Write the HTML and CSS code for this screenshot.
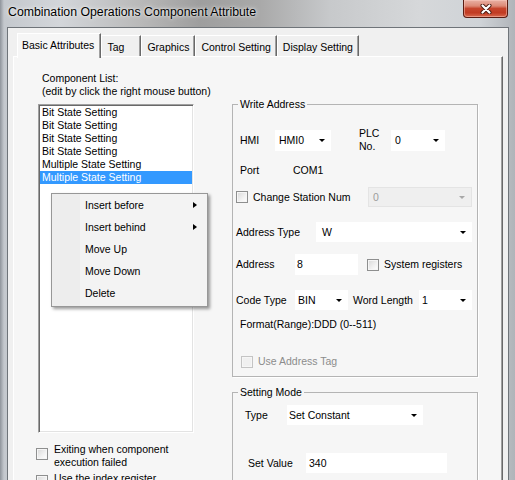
FILE: index.html
```html
<!DOCTYPE html>
<html>
<head>
<meta charset="utf-8">
<link rel="stylesheet" href="styles.css">
</head>
<body>
<div class="window">
  <div class="titlebar">
    <span class="title">Combination Operations Component Attribute</span>
    <div class="close">
      <svg width="12" height="10" viewBox="0 0 12 10">
        <path d="M2.5 1.5 L9.5 8.5 M9.5 1.5 L2.5 8.5" stroke="#4a1a10" stroke-width="4" stroke-linecap="round" fill="none"/>
        <path d="M2.5 1.5 L9.5 8.5 M9.5 1.5 L2.5 8.5" stroke="#ffffff" stroke-width="2.2" stroke-linecap="round" fill="none"/>
      </svg>
    </div>
  </div>
  <div class="client">
    <div class="tabs">
      <div class="tab active">Basic Attributes</div>
      <div class="tab">Tag</div>
      <div class="tab">Graphics</div>
      <div class="tab">Control Setting</div>
      <div class="tab">Display Setting</div>
    </div>
    <div class="panel">
      <div class="left">
        <div class="caption">Component List:<br>(edit by click the right mouse button)</div>
        <div class="listbox">
          <div class="item">Bit State Setting</div>
          <div class="item">Bit State Setting</div>
          <div class="item">Bit State Setting</div>
          <div class="item">Bit State Setting</div>
          <div class="item">Multiple State Setting</div>
          <div class="item sel">Multiple State Setting</div>
          <div class="menu">
            <div class="mi">Insert before<span class="sub"></span></div>
            <div class="mi">Insert behind<span class="sub"></span></div>
            <div class="mi">Move Up</div>
            <div class="mi">Move Down</div>
            <div class="mi">Delete</div>
          </div>
        </div>
        <div class="check c-exit"><span class="box"></span><span class="ctext">Exiting when component<br>execution failed</span></div>
        <div class="check c-index"><span class="box"></span><span class="ctext">Use the index register</span></div>
      </div>
      <div class="right">
        <fieldset class="group write">
          <legend>Write Address</legend>
          <div class="row r-hmi">
            <span class="lbl w-hmi">HMI</span>
            <div class="combo w-c1">HMI0</div>
            <span class="plc">PLC<br>No.</span>
            <div class="combo w-c2">0</div>
          </div>
          <div class="row r-port">
            <span class="lbl w-port">Port</span>
            <span>COM1</span>
          </div>
          <div class="row r-station">
            <span class="box"></span>
            <span class="lbl w-station">Change Station Num</span>
            <div class="combo disabled w-st">0</div>
          </div>
          <div class="row r-type">
            <span class="lbl w-type">Address Type</span>
            <div class="combo w-tc">W</div>
          </div>
          <div class="row r-addr">
            <span class="lbl w-addr">Address</span>
            <div class="textbox w-ab">8</div>
            <span class="box box-sys"></span>
            <span class="lbl">System registers</span>
          </div>
          <div class="row r-code">
            <span class="lbl w-addr">Code Type</span>
            <div class="combo w-bin">BIN</div>
            <span class="lbl w-wl">Word Length</span>
            <div class="combo w-bin">1</div>
          </div>
          <div class="row r-format">Format(Range):DDD (0--511)</div>
          <div class="row r-tag">
            <span class="box disabled"></span>
            <span class="lbl gray">Use Address Tag</span>
          </div>
        </fieldset>
        <fieldset class="group mode">
          <legend>Setting Mode</legend>
          <div class="row r-mtype">
            <span class="lbl w-mt">Type</span>
            <div class="combo w-mc">Set Constant</div>
          </div>
          <div class="row r-value">
            <span class="lbl w-sv">Set Value</span>
            <div class="textbox w-svb">340</div>
          </div>
        </fieldset>
      </div>
    </div>
  </div>
</div>
</body>
</html>
```

FILE: styles.css
```css
* { box-sizing: border-box; }
html, body { margin: 0; padding: 0; }
body {
  width: 515px;
  height: 480px;
  overflow: hidden;
  font-family: "Liberation Sans", Arial, sans-serif;
  font-size: 10.5px;
  color: #000;
}
.window {
  width: 515px;
  height: 480px;
  display: flex;
  flex-direction: column;
  overflow: hidden;
  background: linear-gradient(to right, #8f949b 0px, #c4c8cd 4px, #d3d6da 60px, #b9b9b9 140px, #9e9e9e 200px, #a9a9a9 260px, #c7c9cb 330px, #d6d8da 420px, #cfd3d7 480px, #b0b4b9 515px);
}
.titlebar {
  height: 27px;
  flex: none;
  display: flex;
  align-items: flex-start;
  padding-left: 8px;
}
.title {
  font-size: 12.3px;
  line-height: 13px;
  margin-top: 6px;
  white-space: nowrap;
  text-shadow: 0 0 5px rgba(255,255,255,0.9), 0 0 2px rgba(255,255,255,0.8);
}
.close {
  margin-left: auto;
  margin-right: 7px;
  width: 45px;
  height: 18px;
  border: 1px solid #5a1c12;
  border-top: none;
  border-radius: 0 0 4px 4px;
  background: linear-gradient(to bottom, #e9b1a4 0%, #dd8a77 35%, #c6452d 50%, #c13b22 75%, #d8694e 100%);
  box-shadow: inset 0 0 0 1px rgba(255,210,200,0.45);
  display: flex;
  align-items: center;
  justify-content: center;
}
.client {
  flex: 1;
  margin: 0 6px 0 7px;
  border: 1px solid #6f7479;
  border-bottom: none;
  background: #f0f0f0;
  padding: 5px 5px 0 5px;
  display: flex;
  flex-direction: column;
  min-height: 0;
}
.tabs {
  display: flex;
  align-items: flex-end;
  margin-left: 4px;
  flex: none;
}
.tab {
  height: 21px;
  min-width: 40px;
  padding: 2px 5px 0 5px;
  line-height: 18px;
  white-space: nowrap;
  background: #f0f0f0;
  border-top: 1px solid #fff;
  border-left: 1px solid #fff;
  border-right: 1px solid #696969;
  box-shadow: inset -1px 0 0 #a0a0a0;
}
.tab.active {
  height: 25px;
  margin-bottom: -2px;
  padding: 0 6px 0 4px;
  line-height: 22px;
  background: #f6f6f6;
  position: relative;
  z-index: 1;
}
.panel {
  flex: 1;
  min-height: 0;
  overflow: hidden;
  background: #f6f6f6;
  border-top: 1px solid #fff;
  border-left: 1px solid #fff;
  border-right: 1px solid #696969;
  box-shadow: inset -1px 0 0 #a0a0a0;
  display: grid;
  grid-template-columns: 156px 246px;
  column-gap: 38px;
  align-items: start;
  padding-left: 24px;
}
.left { padding-top: 15px; }
.caption { line-height: 13px; white-space: nowrap; padding-left: 4px; }
.listbox {
  margin-top: 6px;
  height: 329px;
  background: #fff;
  border-top: 1px solid #a0a0a0;
  border-left: 1px solid #a0a0a0;
  border-bottom: 1px solid #fff;
  border-right: 1px solid #fff;
  box-shadow: inset 1px 1px 0 #696969, inset -1px -1px 0 #e3e3e3;
  padding: 1px 1px 0 1px;
  position: relative;
}
.item {
  height: 13px;
  line-height: 13px;
  padding-left: 2px;
  white-space: nowrap;
}
.item.sel { background: #3399ff; color: #fff; }
.menu {
  position: absolute;
  left: 12px;
  top: 88px;
  width: 157px;
  height: 114px;
  border: 1px solid #979797;
  background: linear-gradient(to right, #ededed 0, #ededed 28px, #f3f3f3 28px);
  box-shadow: 2px 2px 3px rgba(0,0,0,0.4);
  padding: 0 2px 2px 2px;
}
.mi {
  height: 22px;
  line-height: 22px;
  padding-left: 31px;
  display: flex;
  align-items: center;
  white-space: nowrap;
}
.sub {
  margin-left: auto;
  margin-right: 8px;
  width: 0;
  height: 0;
  border-left: 4px solid #000;
  border-top: 3.5px solid transparent;
  border-bottom: 3.5px solid transparent;
}
.check {
  display: flex;
  align-items: flex-start;
  margin-left: -2px;
  line-height: 13px;
}
.c-exit { margin-top: 10px; }
.c-exit .box { margin-top: 5px; }
.c-index { margin-top: 3px; }
.c-index .box { margin-top: 3px; }
.ctext { margin-left: 6px; white-space: nowrap; }
.box {
  flex: none;
  width: 12px;
  height: 12px;
  border: 1px solid #8e8f8f;
  background: linear-gradient(135deg, #d8d8d8 0%, #f2f2f2 60%, #ffffff 100%);
  box-shadow: inset 0 0 0 1px #f6f6f6;
}
.box.disabled {
  border-color: #c4c4c4;
  background: #f0f0f0;
}
.group {
  margin: 0;
  padding: 0;
  min-width: 0;
  width: 246px;
  border: 1px solid #b4b4b4;
  box-shadow: 1px 1px 0 #fff;
}
.group legend {
  margin-left: 5px;
  padding: 0 2px;
  line-height: 13px;
}
.write { margin-top: 41px; padding-bottom: 8px; }
.mode { margin-top: 9px; padding-bottom: 20px; }
.row {
  display: flex;
  align-items: center;
  white-space: nowrap;
  line-height: 13px;
}
.lbl { flex: none; }
.combo, .textbox {
  flex: none;
  display: flex;
  align-items: center;
  height: 20px;
  background: #fff;
  padding-left: 4px;
}
.combo::after {
  content: "";
  margin-left: auto;
  margin-right: 6px;
  width: 0;
  height: 0;
  border-left: 3px solid transparent;
  border-right: 3px solid transparent;
  border-top: 3px solid #000;
}
.combo.disabled {
  background: #efefef;
  color: #9d9d9d;
  border: 1px solid #e4e4e4;
}
.combo.disabled::after { border-top-color: #a8a8a8; }
.gray { color: #8c8c8c; }

.r-hmi { margin-top: 16px; padding-left: 7px; }
.w-hmi { width: 35px; }
.w-c1 { width: 56px; height: 21px; }
.plc { margin-left: 28px; width: 32px; line-height: 13px; }
.w-c2 { width: 54px; height: 21px; }

.r-port { margin-top: 11px; padding-left: 7px; }
.w-port { width: 53px; }

.r-station { margin-top: 10px; padding-left: 3px; }
.w-station { margin-left: 5px; width: 115px; }
.w-st { width: 104px; padding-left: 4px; }

.r-type { margin-top: 15px; padding-left: 3px; }
.w-type { width: 80px; }
.w-tc { width: 156px; padding-left: 6px; }

.r-addr { margin-top: 12px; padding-left: 3px; }
.w-addr { width: 59px; }
.w-ab { width: 63px; height: 21px; padding-left: 2px; }
.box-sys { margin-left: 9px; margin-right: 5px; }

.r-code { margin-top: 15px; padding-left: 3px; }
.w-bin { width: 53px; padding-left: 3px; }
.w-wl { margin-left: 5px; width: 66px; }

.r-format { margin-top: 8px; padding-left: 7px; }

.r-tag { margin-top: 24px; padding-left: 8px; }
.r-tag .lbl { margin-left: 5px; }

.r-mtype { margin-top: 6px; padding-left: 12px; }
.w-mt { width: 42px; }
.w-mc { width: 136px; padding-left: 2px; }

.r-value { margin-top: 28px; padding-left: 15px; }
.w-sv { width: 58px; }
.w-svb { width: 141px; padding-left: 3px; }
```
